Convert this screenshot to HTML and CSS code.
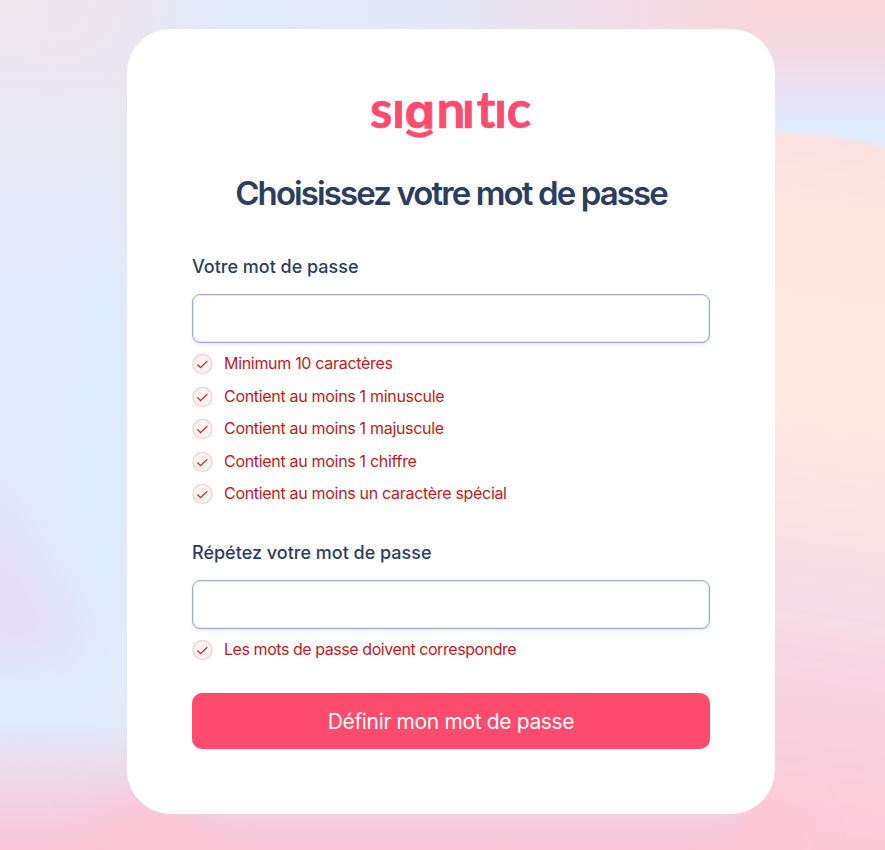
FILE: index.html
```
<!DOCTYPE html>
<html lang="fr">

<head>
  <meta charset="utf-8">
  <title>Signitic</title>
  <link rel="stylesheet" href="styles.css">
</head>

<body>
  <svg class="background" viewBox="0 0 885 850" preserveAspectRatio="none" aria-hidden="true">
    <defs>
      <linearGradient id="left" x1="0" y1="0" x2="0" y2="1">
        <stop offset="0" stop-color="#ece5ef"></stop>
        <stop offset=".2" stop-color="#e7e8f5"></stop>
        <stop offset=".36" stop-color="#e1eafb"></stop>
        <stop offset=".8" stop-color="#e0ebfc"></stop>
        <stop offset=".85" stop-color="#e1eafa"></stop>
        <stop offset=".92" stop-color="#efd7e8"></stop>
        <stop offset="1" stop-color="#fbc5d6"></stop>
      </linearGradient>
      <linearGradient id="top" x1="0" y1="0" x2="1" y2="0">
        <stop offset="0" stop-color="#e4e9f7" stop-opacity="0"></stop>
        <stop offset=".12" stop-color="#e6e8f6" stop-opacity="0"></stop>
        <stop offset=".25" stop-color="#e2eaf9"></stop>
        <stop offset=".48" stop-color="#e3e8f7"></stop>
        <stop offset=".8" stop-color="#f6d8e0"></stop>
        <stop offset="1" stop-color="#fad5db"></stop>
      </linearGradient>
      <linearGradient id="sky" x1="0" y1="0" x2="0" y2="1">
        <stop offset="0" stop-color="#f9d6dc"></stop>
        <stop offset=".32" stop-color="#f4dae3"></stop>
        <stop offset=".55" stop-color="#eae1f2"></stop>
        <stop offset=".85" stop-color="#dfecfc"></stop>
        <stop offset="1" stop-color="#dfecfc"></stop>
      </linearGradient>
      <linearGradient id="peach" gradientUnits="userSpaceOnUse" x1="860" y1="130" x2="750" y2="850">
        <stop offset="0" stop-color="#fbdfe1"></stop>
        <stop offset=".13" stop-color="#fde8e1"></stop>
        <stop offset=".4" stop-color="#fde9e2"></stop>
        <stop offset=".62" stop-color="#f6dfe7"></stop>
        <stop offset=".8" stop-color="#f9d1df"></stop>
        <stop offset="1" stop-color="#fac9d8"></stop>
      </linearGradient>
      <filter id="soft" x="-50%" y="-50%" width="200%" height="200%">
        <feGaussianBlur stdDeviation="22"></feGaussianBlur>
      </filter>
      <filter id="edge">
        <feGaussianBlur stdDeviation="2"></feGaussianBlur>
      </filter>
    </defs>
    <rect width="885" height="850" fill="url(#left)"></rect>
    <rect width="885" height="60" fill="url(#top)"></rect>
    <rect x="752" width="133" height="160" fill="url(#sky)"></rect>
    <path d="M740 132C800 130 845 138 920 153V900H740Z" fill="url(#peach)" filter="url(#edge)"></path>
    <g filter="url(#soft)">
      <ellipse cx="5" cy="0" rx="30" ry="25" fill="#f0e8e8"></ellipse>
      <ellipse cx="55" cy="15" rx="28" ry="25" fill="#f1e3ee"></ellipse>
      <ellipse cx="110" cy="430" rx="35" ry="200" fill="#deebfc"></ellipse>
      <path d="M-30 460C20 530 60 600 85 650L-30 670Z" fill="#e5def5"></path>
      <ellipse cx="30" cy="700" rx="70" ry="12" fill="#ddeefd"></ellipse>
      <ellipse cx="150" cy="850" rx="55" ry="50" fill="#fcc4d4"></ellipse>
      <ellipse cx="770" cy="850" rx="25" ry="45" fill="#fdc4d4"></ellipse>
    </g>
  </svg>

  <main class="card">
    <svg class="logo" viewBox="0 0 162 46" role="img" aria-label="signitic">
      <defs>
        <clipPath id="bowl">
          <rect x="-2" width="166" height="35.8"></rect>
        </clipPath>
      </defs>
      <text class="logo-text" y="34.6" x="0 22 34.5 66.5 91.7 106.5 124 136.5" clip-path="url(#bowl)">sı<tspan class="logo-g">g</tspan>nıtıc</text>
      <path class="smile" d="M37 38Q49.5 46.5 62 38"></path>
    </svg>

    <h1 class="title"><span>Choisissez votre mot de passe</span></h1>

    <form class="form">
      <label class="label" for="password">Votre mot de passe</label>
      <input class="input" id="password" type="password">
      <ul class="rules">
        <li class="rule">
          <svg class="check" viewBox="0 0 22 22"><circle cx="11" cy="11" r="10"></circle><path d="M5.7 11.5L9 14.8L16 8"></path></svg>
          <span>Minimum 10 caractères</span>
        </li>
        <li class="rule">
          <svg class="check" viewBox="0 0 22 22"><circle cx="11" cy="11" r="10"></circle><path d="M5.7 11.5L9 14.8L16 8"></path></svg>
          <span>Contient au moins 1 minuscule</span>
        </li>
        <li class="rule">
          <svg class="check" viewBox="0 0 22 22"><circle cx="11" cy="11" r="10"></circle><path d="M5.7 11.5L9 14.8L16 8"></path></svg>
          <span>Contient au moins 1 majuscule</span>
        </li>
        <li class="rule">
          <svg class="check" viewBox="0 0 22 22"><circle cx="11" cy="11" r="10"></circle><path d="M5.7 11.5L9 14.8L16 8"></path></svg>
          <span>Contient au moins 1 chiffre</span>
        </li>
        <li class="rule">
          <svg class="check" viewBox="0 0 22 22"><circle cx="11" cy="11" r="10"></circle><path d="M5.7 11.5L9 14.8L16 8"></path></svg>
          <span>Contient au moins un caractère spécial</span>
        </li>
      </ul>

      <label class="label label-repeat" for="repeat">Répétez votre mot de passe</label>
      <input class="input" id="repeat" type="password">
      <ul class="rules">
        <li class="rule rule-match">
          <svg class="check" viewBox="0 0 22 22"><circle cx="11" cy="11" r="10"></circle><path d="M5.7 11.5L9 14.8L16 8"></path></svg>
          <span>Les mots de passe doivent correspondre</span>
        </li>
      </ul>

      <button class="submit" type="button">Définir mon mot de passe</button>
    </form>
  </main>
</body>

</html>
```
FILE: styles.css
```
* {
  box-sizing: border-box;
}

body {
  margin: 0;
  height: 850px;
  overflow: hidden;
  font-family: Inter, "Liberation Sans", sans-serif;
  color: #2c3e5d;
}

.background {
  position: absolute;
  top: 0;
  left: 0;
  width: 100%;
  height: 100%;
  z-index: -1;
}

.card {
  width: 648px;
  height: 785px;
  margin: 29px 0 0 127px;
  padding: 64px 65px 0;
  border-radius: 44px;
  background: #ffffff;
}

.logo {
  display: block;
  width: 162px;
  height: 46px;
  margin: 0 auto;
  overflow: visible;
}

.logo-text {
  font-family: Lato, sans-serif;
  font-size: 51px;
  font-weight: 700;
  fill: #ff4b6e;
  stroke: #ff4b6e;
  stroke-width: 0.6;
  stroke-linejoin: round;
}

.logo-g {
  font-family: Inter, sans-serif;
  font-size: 48px;
}

.smile {
  fill: none;
  stroke: #ff4b6e;
  stroke-width: 5;
}

.title {
  margin: 34px 0 0;
  font-size: 33px;
  line-height: 40px;
  font-weight: 600;
  letter-spacing: -1.9px;
  text-align: center;
  white-space: nowrap;
}

.form {
  display: flex;
  flex-direction: column;
  margin-top: 42px;
}

.label {
  font-size: 18px;
  line-height: 24px;
  font-weight: 500;
}

.label-repeat {
  margin-top: 36px;
}

.input {
  height: 49px;
  margin-top: 15px;
  padding: 0 16px;
  border: 1px solid #9badd3;
  border-radius: 8px;
  background: #ffffff;
  box-shadow: inset 0 0 0 1px #e1e8f5, 0 2px 3px rgba(50, 70, 110, 0.1);
  font: inherit;
}

.rules {
  display: flex;
  flex-direction: column;
  gap: 10.5px;
  margin: 10px 0 0;
  padding: 0;
  list-style: none;
}

.rule {
  display: flex;
  align-items: center;
  gap: 11px;
  height: 22px;
  color: #b91c1c;
  font-size: 16px;
  line-height: 22px;
  letter-spacing: -0.31px;
}

.rule span {
  padding-bottom: 2px;
}

.rule-match {
  letter-spacing: -0.44px;
}

.check {
  width: 21px;
  height: 22px;
  fill: none;
}

.check circle {
  fill: #fef2f2;
  stroke: #f8cfcf;
  stroke-width: 1.4;
}

.check path {
  stroke: #c02929;
  stroke-width: 1.4;
}

.submit {
  height: 56px;
  margin-top: 32px;
  border: 0;
  border-radius: 10px;
  background: #ff4b6e;
  color: #ffffff;
  font: 400 21px Inter, sans-serif;
  letter-spacing: -0.35px;
}
```
